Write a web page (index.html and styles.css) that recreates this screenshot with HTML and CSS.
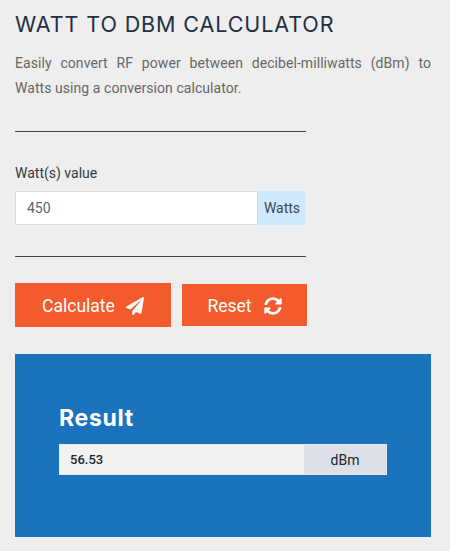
FILE: index.html
```html
<!DOCTYPE html>
<html lang="en">
<head>
<meta charset="utf-8">
<title>Watt to dBm Calculator</title>
<link rel="stylesheet" href="styles.css">
</head>
<body>
<main class="page">
  <h1 class="title">WATT TO DBM CALCULATOR</h1>
  <p class="intro">Easily convert RF power between decibel-milliwatts (dBm) to Watts using a conversion calculator.</p>
  <form class="form">
    <div class="rule"></div>
    <label class="label" for="watts">Watt(s) value</label>
    <div class="field">
      <input class="input" id="watts" type="text" value="450">
      <span class="addon">Watts</span>
    </div>
    <div class="rule rule-lower"></div>
  </form>
  <div class="actions">
    <button class="btn btn-calc" type="button">Calculate
      <svg class="icon" viewBox="0 0 512 512"><path d="M476 3.2L12.5 270.6c-18.1 10.4-15.8 35.6 2.2 43.2L121 358.4l287.3-253.2c5.5-4.9 13.3 2.6 8.6 8.3L176 407v80.5c0 23.6 28.5 32.9 42.5 15.8L282 426l124.6 52.2c14.2 6 30.4-2.9 33-18.2l72-432C515 7.8 493.3-6.8 476 3.2z"/></svg>
    </button>
    <button class="btn btn-reset" type="button">Reset
      <svg class="icon" viewBox="0 0 512 512"><path d="M370.72 133.28C339.458 104.008 298.888 87.962 255.848 88c-77.458.068-144.328 53.178-162.791 126.85-1.344 5.363-6.122 9.15-11.651 9.15H24.103c-7.498 0-13.194-6.807-11.807-14.176C33.933 94.924 134.813 8 256 8c66.448 0 126.791 26.136 171.315 68.685L463.03 40.97C478.149 25.851 504 36.559 504 57.941V192c0 13.255-10.745 24-24 24H345.941c-21.382 0-32.09-25.851-16.971-40.971l41.75-41.749zM32 296h134.059c21.382 0 32.09 25.851 16.971 40.971l-41.75 41.75c31.262 29.273 71.835 45.319 114.876 45.28 77.418-.07 144.315-53.144 162.787-126.849 1.344-5.363 6.122-9.15 11.651-9.15h57.304c7.498 0 13.194 6.807 11.807 14.176C478.067 417.076 377.187 504 256 504c-66.448 0-126.791-26.136-171.315-68.685L48.97 471.03C33.851 486.149 8 475.441 8 454.059V320c0-13.255 10.745-24 24-24z"/></svg>
    </button>
  </div>
  <section class="result">
    <h2 class="result-title">Result</h2>
    <div class="result-row">
      <span class="result-value">56.53</span>
      <span class="result-unit">dBm</span>
    </div>
  </section>
</main>
</body>
</html>
```
FILE: styles.css
```css
* { box-sizing: border-box; }
html, body { margin: 0; padding: 0; }
body {
  width: 450px;
  height: 551px;
  overflow: hidden;
  background: #eeeeee;
  font-family: Roboto, "Liberation Sans", sans-serif;
}
.page { padding: 12px 19px 0 15px; }
.title {
  margin: 0;
  font-family: Inter, "Noto Sans", sans-serif;
  font-size: 21.5px;
  line-height: 24px;
  font-weight: 400;
  letter-spacing: 0.9px;
  color: #1f3044;
  white-space: nowrap;
}
.intro {
  margin: 15px 0 0;
  font-size: 14px;
  line-height: 25px;
  letter-spacing: 0.06px;
  color: #666666;
  text-align: justify;
}
.form { width: 291px; padding-top: 30px; }
.rule { height: 1px; background: #444444; }
.label {
  display: block;
  margin-top: 33px;
  font-size: 14px;
  line-height: 17px;
  color: #2f3b47;
}
.field { display: flex; height: 34px; margin-top: 9px; }
.input {
  width: 243px;
  height: 34px;
  padding: 0 10px 0 11px;
  border: 1px solid #d5d9e2;
  background: #ffffff;
  font-family: inherit;
  font-size: 14px;
  color: #5c6670;
  outline: none;
}
.addon {
  flex: 1;
  display: flex;
  align-items: center;
  justify-content: center;
  background: #d1e9ff;
  font-size: 14px;
  color: #3d4652;
}
.rule-lower { margin-top: 31px; }
.actions { display: flex; gap: 10px; margin-top: 26px; }
.btn {
  display: flex;
  align-items: center;
  justify-content: center;
  gap: 11px;
  height: 44px;
  padding: 1px 0 0;
  border: 1px solid #f35b2c;
  background: #f35b2c;
  color: #ffffff;
  font-family: inherit;
  font-size: 17.5px;
}
.btn-calc { width: 156px; }
.btn-reset { width: 127px; gap: 12px; border-color: #f3efec; box-shadow: inset 0 0 0 1px #f35b2c; }
.icon { width: 18px; height: 18px; fill: #ffffff; }
.result {
  height: 183px;
  margin-top: 27px;
  padding: 50px 43px 0;
  background: #1a73bc;
  border: 1px solid #1a73bc;
}
.result-title {
  margin: 0;
  font-family: Inter, "DejaVu Sans", sans-serif;
  font-size: 23px;
  line-height: 26px;
  font-weight: 700;
  letter-spacing: 0.7px;
  color: #ffffff;
}
.result-row {
  display: flex;
  width: 328px;
  height: 31px;
  margin-top: 13px;
  font-size: 13px;
  font-weight: 500;
  color: #22262c;
  border: 1px solid #e6e9ee;
}
.result-value {
  flex: 1;
  display: flex;
  align-items: center;
  padding-left: 10px;
  background: #f2f2f2;
}
.result-unit {
  width: 82px;
  display: flex;
  align-items: center;
  justify-content: center;
  background: #dce0e8;
  font-size: 14px;
  font-weight: 400;
}
```
